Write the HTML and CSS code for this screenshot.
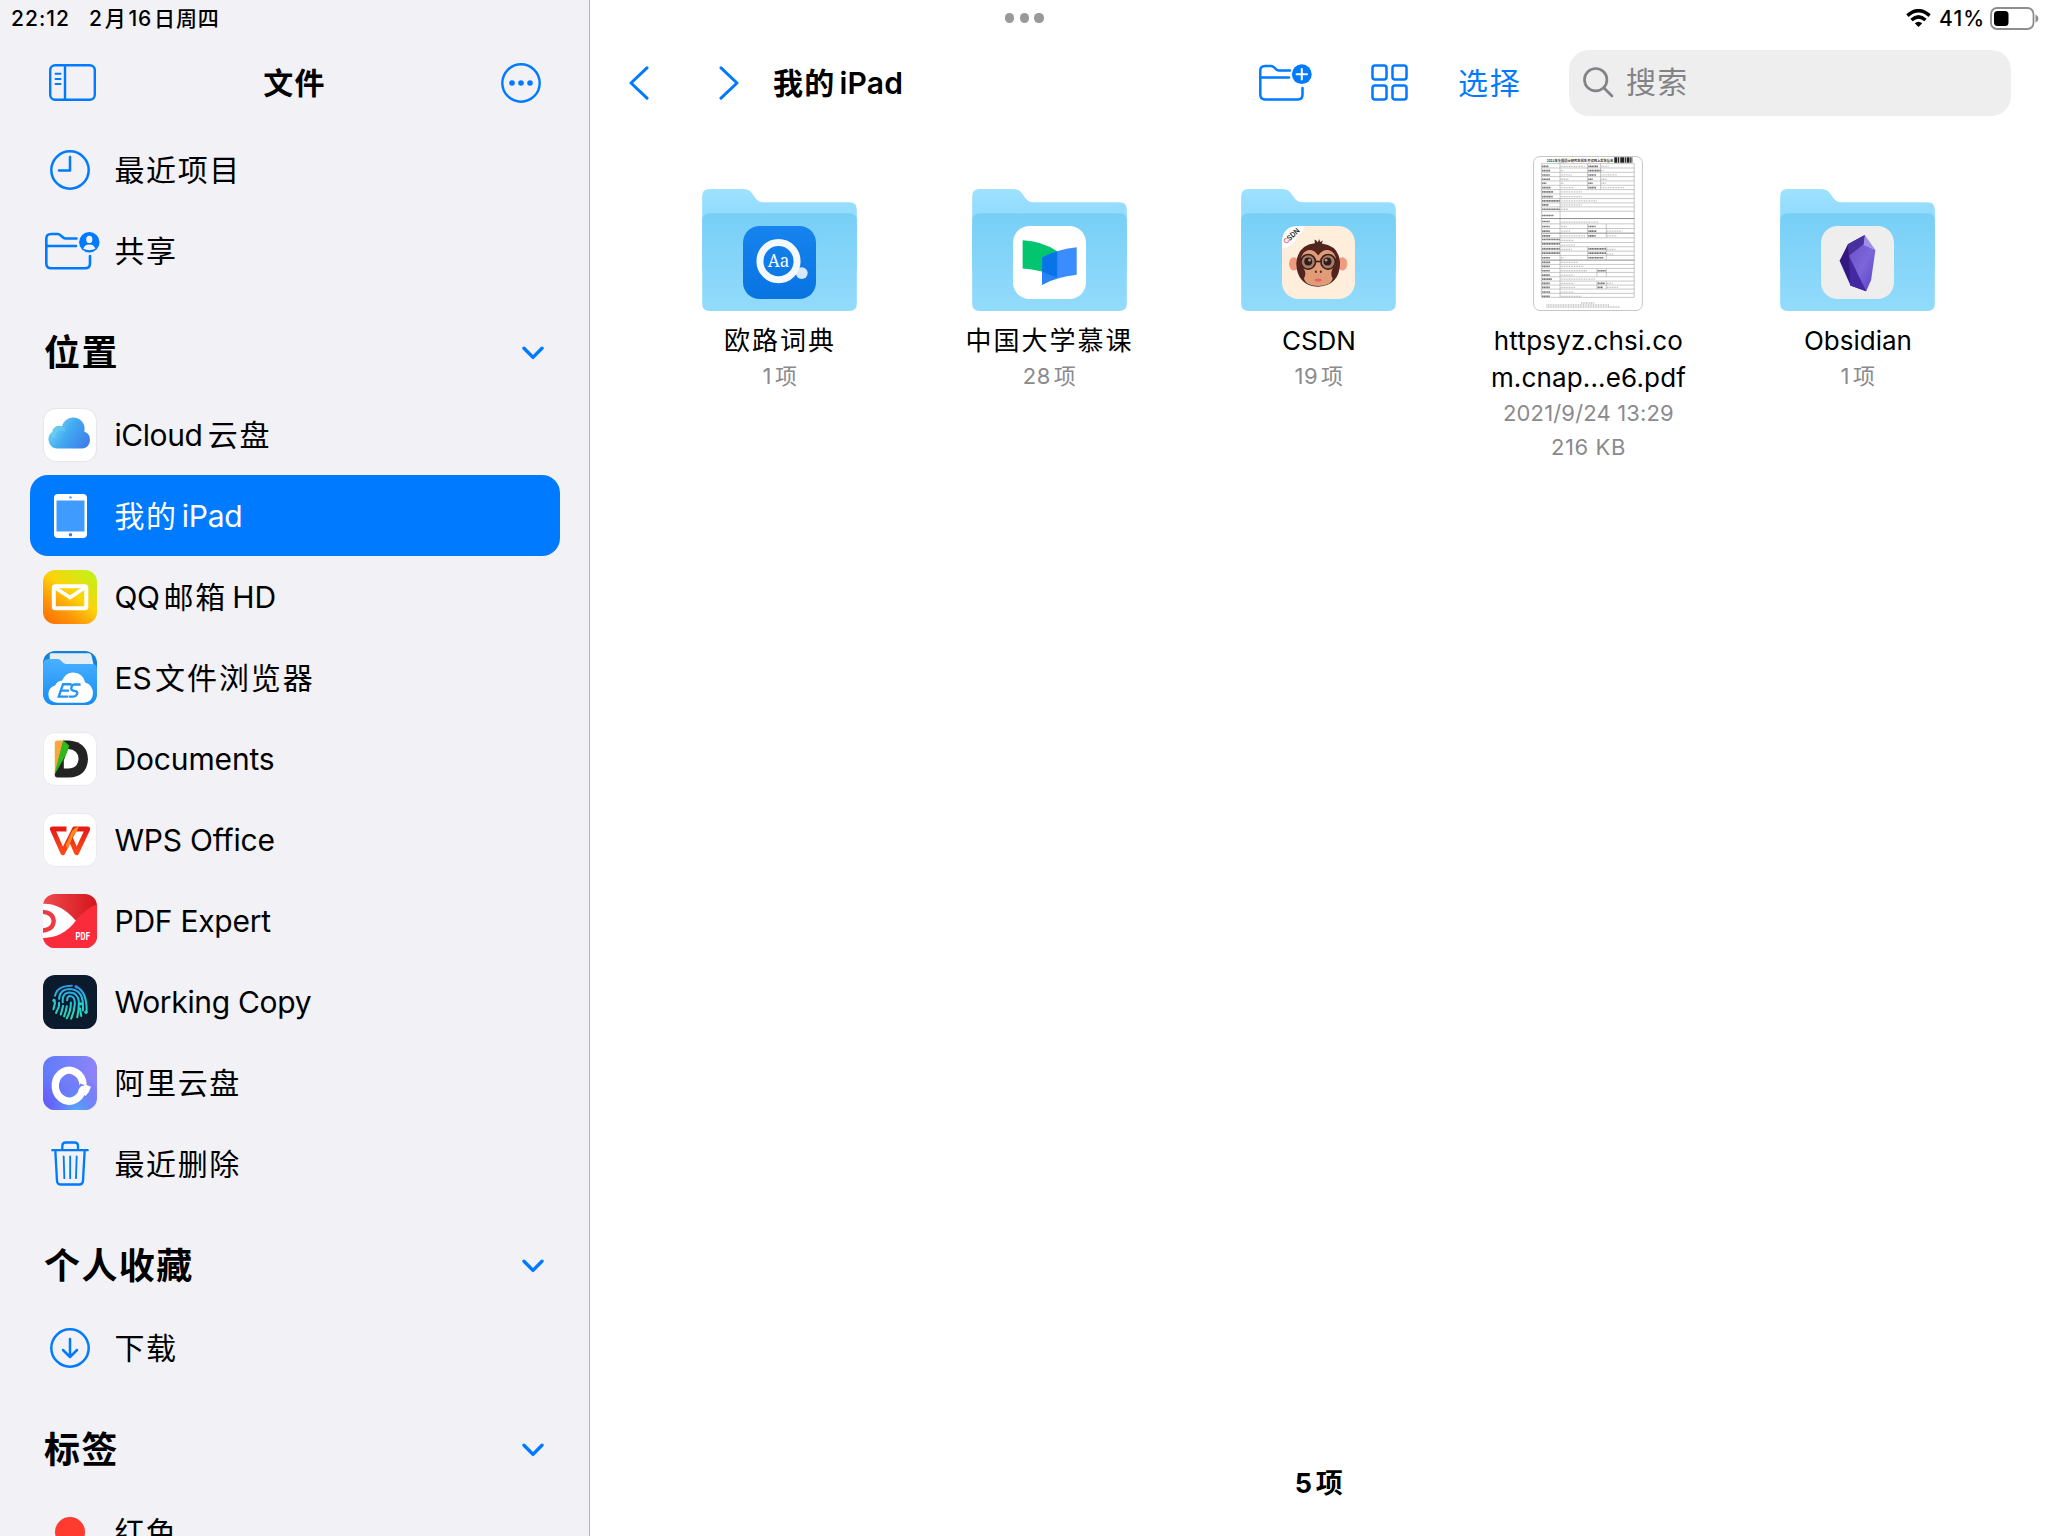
FILE: index.html
```html
<!DOCTYPE html>
<html lang="zh-CN">
<head>
<meta charset="utf-8">
<title>文件</title>
<link rel="stylesheet" href="styles.css">
</head>
<body>
<svg class="defs" width="0" height="0" aria-hidden="true">
  <defs>
    <linearGradient id="folderBack" x1="0" y1="0" x2="0" y2="1"><stop offset="0" stop-color="#9ee2ff"/><stop offset=".2" stop-color="#96ddfd"/><stop offset="1" stop-color="#8ad8fb"/></linearGradient>
    <linearGradient id="folderFront" x1="0" y1="0" x2="0" y2="1"><stop offset="0" stop-color="#77cff6"/><stop offset="1" stop-color="#93dbfc"/></linearGradient>
    <symbol id="folder" viewBox="68 58 464 366">
      <path fill="url(#folderBack)" d="M68 80Q68 58 90 58H190Q208 58 217 70L228 86Q237 98 252 98H510Q532 98 532 120V300H68Z"/>
      <path fill="url(#folderFront)" d="M68 154Q68 131 91 131H509Q532 131 532 154V402Q532 424 510 424H90Q68 424 68 402Z"/>
    </symbol>
    <symbol id="chevron" viewBox="0 0 22 14"><path d="M2 2.2 11 11.4 20 2.2" fill="none" stroke="#007aff" stroke-width="3.4" stroke-linecap="round" stroke-linejoin="round"/></symbol>
  </defs>
</svg>
<div class="screen">
  <aside class="sidebar">
    <div class="status status-left"><span class="time">22:12</span><span class="date">2<i class="thin"></i>月<i class="thin"></i>16<i class="thin"></i>日周四</span></div>
    <header class="side-head">
      <svg class="ic-panel" viewBox="0 0 47 37" fill="none" stroke="#007aff" stroke-width="2.4"><rect x="1.2" y="1.2" width="44.6" height="34.6" rx="5"/><path d="M16 1.2v34.6"/><path d="M6.5 9.8h5M6.5 14.9h5M6.5 20h5" stroke-width="2" stroke-linecap="round"/></svg>
      <h1>文件</h1>
      <svg class="ic-circle" viewBox="0 0 40 40"><circle cx="20" cy="20" r="18.7" fill="none" stroke="#007aff" stroke-width="2.4"/><g fill="#007aff"><circle cx="11" cy="20" r="2.8"/><circle cx="20" cy="20" r="2.8"/><circle cx="29" cy="20" r="2.8"/></g></svg>
    </header>
    <nav class="list">
      <div class="row"><span class="slot"><svg class="ic-circle" viewBox="0 0 40 40" fill="none" stroke="#007aff"><circle cx="20" cy="20" r="18.7" stroke-width="2.5"/><path d="M20 7v13.6H9" stroke-width="2.5" stroke-linecap="round" stroke-linejoin="round"/></svg></span><span class="label cjk">最近项目</span></div>
      <div class="row"><span class="slot"><svg class="ic-shared" viewBox="0 0 55 38"><g fill="none" stroke="#007aff" stroke-width="2.6" stroke-linecap="round" stroke-linejoin="round"><path d="M31.5 6.5H20.5C17 6.5 16.5 2 12.8 2H6Q1.3 2 1.3 6.7V31.5Q1.3 36.3 6.2 36.3H40.3Q45 36.3 45 31.5V24"/><path d="M1.3 14H31"/></g><circle cx="44.3" cy="10.3" r="10.2" fill="#007aff"/><ellipse cx="44.3" cy="7.4" rx="3.1" ry="3.7" fill="#f2f2f7"/><path d="M38.2 16.7Q39.5 12.4 44.3 12.4T50.4 16.7Q44.3 19.6 38.2 16.7Z" fill="#f2f2f7"/></svg></span><span class="label cjk">共享</span></div>
      <div class="section"><h2>位置</h2><svg class="ic-chev"><use href="#chevron"/></svg></div>
      <div class="row"><span class="slot"><span class="app white"><svg viewBox="0 0 52 52"><defs><linearGradient id="cl" x1="0" y1=".2" x2="1" y2=".7"><stop offset="0" stop-color="#7ed8f5"/><stop offset=".5" stop-color="#41a9f1"/><stop offset="1" stop-color="#3f7fe9"/></linearGradient></defs><path fill="url(#cl)" d="M13 39.500A9.300 9.300 0 0 1 8.300 22.700 7 7 0 0 1 18 17.300 11 11 0 0 1 40.300 22.500 8.900 8.900 0 0 1 39 39.500Z"/><path d="M9 22.700A7 7 0 0 1 19 18Q22 20 21 23 17 20.500 14 22.500 10.500 25 11 30 4 27 9 22.700Z" fill="#6fd3ee" opacity=".5"/></svg></span></span><span class="label"><span class="l-icloud">iCloud</span><i class="gap w"></i><span class="cjk">云盘</span></span></div>
      <div class="row selected"><span class="slot"><svg class="ic-ipad" viewBox="0 0 33 44"><rect width="33" height="44" rx="4" fill="#fff"/><rect x="2.500" y="6.500" width="28" height="31" fill="#409bff"/><circle cx="16.500" cy="3.400" r="1.200" fill="#409bff"/><circle cx="16.500" cy="40.700" r="1.700" fill="#2f7fe8"/></svg></span><span class="label"><span class="cjk">我的</span><i class="gap"></i><span class="l-ipad">iPad</span></span></div>
      <div class="row"><span class="slot"><svg class="app" viewBox="0 0 54 54"><defs><linearGradient id="qq" x1="0" y1="1" x2=".75" y2="0"><stop offset="0" stop-color="#ff6a00"/><stop offset=".3" stop-color="#fc9208"/><stop offset=".62" stop-color="#fbd30b"/><stop offset="1" stop-color="#c9ee17"/></linearGradient></defs><rect width="54" height="54" rx="12" fill="url(#qq)"/><rect x="10.800" y="16.300" width="32.500" height="22" rx="1.500" fill="none" stroke="#fff" stroke-width="4"/><path d="M12 17.500 27 27.500 42 17.500" fill="none" stroke="#fff" stroke-width="3.600"/></svg></span><span class="label"><span class="l-qq">QQ</span><i class="gap"></i><span class="cjk">邮箱</span><i class="gap w"></i><span class="l-hd">HD</span></span></div>
      <div class="row"><span class="slot"><svg class="app" viewBox="130 33 161 161"><defs><linearGradient id="es" x1="0" y1="0" x2="0" y2="1"><stop offset="0" stop-color="#48b0ff"/><stop offset="1" stop-color="#178cf5"/></linearGradient></defs><rect x="130" y="33" width="161" height="161" rx="36" fill="#1680d8"/><path d="M150 44Q150 40 155 40H267Q274 40 275 48L282 80H150Z" fill="#e6eef5"/><path d="M130 74Q130 57 148 57H172Q181 57 186 64T199 72H275Q291 72 291 88V158Q291 194 255 194H166Q130 194 130 158Z" fill="url(#es)"/><path d="M171 187Q146 185 146 162 146 142 166 136 172 122 187 121 197 97 220 97 249 98 256 127 279 134 279 160 278 185 253 187Z" fill="#fff"/><path d="M215 132H190L183 151H208M183 151 177 169H205M242 133H225Q217 133 215 140 212 149 220 151L229 153Q235 156 230 164 228 169 220 169H207" fill="none" stroke="#2494f5" stroke-width="7"/></svg></span><span class="label"><span class="l-es">ES</span><i class="gap s"></i><span class="cjk wide">文件浏览器</span></span></div>
      <div class="row"><span class="slot"><svg class="app" viewBox="130 275 161 161"><rect x="131.500" y="277" width="158" height="157" rx="34" fill="#fff" stroke="#e4e4e9" stroke-width="2"/><path d="M190 300H208Q263 305 264 356 262 408 208 411H173Q165 411 165 402Z" fill="#232323"/><path d="M204 326Q235 328 236 355 234 383 206 384H192V360Z" fill="#fff"/><path d="M165 308Q165 300 173 300H190L165 398Z" fill="#f9a63a"/><path d="M190 300Q198 305 208 316L202 336 165 402V396Z" fill="#2fb91e"/></svg></span><span class="label l-docs">Documents</span></div>
      <div class="row"><span class="slot"><svg class="app" viewBox="130 518 161 161"><defs><linearGradient id="wps" x1="0" y1="0" x2="0" y2="1"><stop offset="0" stop-color="#e51c17"/><stop offset="1" stop-color="#ff4a17"/></linearGradient></defs><rect x="131.500" y="520" width="158" height="157" rx="34" fill="#fff" stroke="#e4e4e9" stroke-width="2"/><path d="M200 566H158L189 636 224 566H263L230 636 212 594" fill="none" stroke="url(#wps)" stroke-width="15" stroke-linejoin="round"/><path d="M198 614 212 581Q219 561 237 559L230 575Q224 578 218 591L204 625Z" fill="#fb8a20"/></svg></span><span class="label l-wps">WPS Office</span></div>
      <div class="row"><span class="slot"><svg class="app" viewBox="130 762 161 161"><defs><linearGradient id="pe" x1="0" y1="0" x2="1" y2="0"><stop offset="0" stop-color="#ef4a4c"/><stop offset="1" stop-color="#d3151d"/></linearGradient><clipPath id="pc"><rect x="130" y="762" width="161" height="161" rx="36"/></clipPath></defs><g clip-path="url(#pc)"><path fill="url(#pe)" d="M130 762H291V923H130Z"/><path d="M291 792Q250 810 228 842 205 870 168 888L130 893V923H291Z" fill="#fa2b3a"/><path d="M130 791Q184 789 228 842 188 894 130 893Z" fill="#fff"/><path d="M128 815Q160 817 162 842 160 869 128 871" fill="none" stroke="#ee3a45" stroke-width="13"/></g><text x="227" y="899" font-family="Roboto, sans-serif" font-weight="700" font-size="33" textLength="43" lengthAdjust="spacingAndGlyphs" fill="#fff">PDF</text></svg></span><span class="label l-pdf">PDF Expert</span></div>
      <div class="row"><span class="slot"><svg class="app" viewBox="130 45 161 161"><defs><linearGradient id="wc" gradientUnits="userSpaceOnUse" x1="210" y1="70" x2="210" y2="178"><stop offset="0" stop-color="#2d8fe0"/><stop offset=".45" stop-color="#25c3e0"/><stop offset="1" stop-color="#27e0b0"/></linearGradient></defs><rect x="130" y="45" width="161" height="161" rx="36" fill="#0c1a2d"/><g fill="none" stroke="url(#wc)" stroke-width="6" stroke-linecap="round"><path d="M166 107Q172 77 216 77M229 80Q262 94 260 155"/><path d="M162 121 166 128 161 147M178 116Q180 87 211 87 248 90 249 132V151"/><path d="M178 128 177 140 169 158M189 126Q186 98 210 97 236 98 237 127 237 150 232 171"/><path d="M190 137 183 163M202 120Q203 107 212 108 225 110 225 130 223 155 214 175"/><path d="M201 138Q198 157 193 168M213 127Q214 150 201 174M240 144 244 167"/></g><g fill="#28d3c8"><circle cx="163" cy="121" r="5"/><circle cx="242" cy="131" r="5"/><circle cx="258" cy="156" r="5"/><circle cx="229" cy="80" r="5" fill="#2d8fe0"/></g></svg></span><span class="label l-wc">Working Copy</span></div>
      <div class="row"><span class="slot"><svg class="app" viewBox="130 288 161 161"><defs><linearGradient id="al" x1="0" y1="0" x2="1" y2="0"><stop offset="0" stop-color="#5f7cfb"/><stop offset="1" stop-color="#8f83f8"/></linearGradient><radialGradient id="al2" cx=".62" cy="1" r=".65"><stop offset="0" stop-color="#55aafd"/><stop offset="1" stop-color="#5b63f5" stop-opacity="0"/></radialGradient><radialGradient id="al3" cx="0" cy=".95" r=".6"><stop offset="0" stop-color="#6a55f8"/><stop offset="1" stop-color="#6a55f8" stop-opacity="0"/></radialGradient></defs><rect x="130" y="288" width="161" height="161" rx="36" fill="url(#al)"/><rect x="130" y="288" width="161" height="161" rx="36" fill="url(#al3)"/><rect x="130" y="288" width="161" height="161" rx="36" fill="url(#al2)"/><path d="M249.500 374A41.500 46 0 1 0 248 389" fill="none" stroke="#fff" stroke-width="22"/><path d="M258 374 273 380Q269 396 257 407L236 388 243 378Z" fill="#fff"/><path d="M239.500 370 253 374.500 242 378.500Z" fill="#6b83f9"/></svg></span><span class="label cjk">阿里云盘</span></div>
      <div class="row"><span class="slot"><svg class="ic-trash" viewBox="152 546 114 134" fill="none" stroke="#007aff" stroke-width="7" stroke-linecap="round" stroke-linejoin="round"><path d="M156 573H262M186 572V560Q186 550 196 550H223Q233 550 233 560V572M165 574 170 665Q171 676 182 676H237Q247 676 248 665L253 574"/><path d="M190 592 192 657M209.500 592V657M229 592 227 657" stroke-width="5.500"/></svg></span><span class="label cjk">最近删除</span></div>
      <div class="section"><h2>个人收藏</h2><svg class="ic-chev"><use href="#chevron"/></svg></div>
      <div class="row"><span class="slot"><svg class="ic-circle" viewBox="0 0 40 40" fill="none" stroke="#007aff" stroke-width="2.500" stroke-linecap="round" stroke-linejoin="round"><circle cx="20" cy="20" r="18.700"/><path d="M20 11v17.500M13 22l7 7 7-7"/></svg></span><span class="label cjk">下载</span></div>
      <div class="section"><h2>标签</h2><svg class="ic-chev"><use href="#chevron"/></svg></div>
      <div class="row"><span class="slot"><span class="tag-red"></span></span><span class="label cjk">红色</span></div>
    </nav>
  </aside>

  <main class="main">
    <div class="status status-right">
      <span class="multitask"><i></i><i></i><i></i></span>
      <span class="indicators">
        <svg class="ic-wifi" viewBox="0 0 25 18" fill="none" stroke="#000" stroke-width="3.500"><path d="M1.400 6.600Q12.500-3.200 23.600 6.600"/><path d="M5.500 11Q12.500 4.800 19.500 11"/><path d="M8.800 14.300Q12.500 11.200 16.200 14.300L12.500 18Z" fill="#000" stroke="none"/></svg>
        <span class="pct">41%</span>
        <svg class="ic-batt" viewBox="0 0 49 23"><rect x="1" y="1" width="42.500" height="21" rx="6" fill="none" stroke="#8e8e8e" stroke-width="1.800"/><rect x="4" y="4" width="14.500" height="15" rx="3.500"/><path d="M45.500 7.500Q48.500 9 48.500 11.500T45.500 15.500Z" fill="#8e8e8e"/></svg>
      </span>
    </div>
    <header class="toolbar">
      <svg class="ic-nav" viewBox="0 0 20 34"><path d="M18 1.800 2 17 18 32.200" fill="none" stroke="#007aff" stroke-width="3" stroke-linecap="round" stroke-linejoin="round"/></svg>
      <svg class="ic-nav fwd" viewBox="0 0 20 34"><path d="M2 1.800 18 17 2 32.200" fill="none" stroke="#007aff" stroke-width="3" stroke-linecap="round" stroke-linejoin="round"/></svg>
      <h2 class="title"><span class="title-cjk">我的</span><i class="gap"></i><span class="title-lat">iPad</span></h2>
      <svg class="ic-newfolder" viewBox="0 0 53 37"><g fill="none" stroke="#007aff" stroke-width="2.500" stroke-linecap="round" stroke-linejoin="round"><path d="M31 6.500H19.500C16 6.500 16 2 12.200 2H6Q1.300 2 1.300 6.700V30.500Q1.300 35.500 6.200 35.500H39Q43.500 35.500 43.500 30.500V24"/><path d="M1.300 13.500H30"/></g><circle cx="42.800" cy="10.200" r="9.900" fill="#007aff"/><path d="M42.800 5v10.400M37.600 10.200H48" stroke="#fff" stroke-width="2" stroke-linecap="round"/></svg>
      <svg class="ic-grid" viewBox="0 0 37 37" fill="none" stroke="#007aff" stroke-width="2.500"><rect x="1.500" y="1.500" width="14" height="14" rx="2.500"/><rect x="21.500" y="1.500" width="14" height="14" rx="2.500"/><rect x="1.500" y="21.500" width="14" height="14" rx="2.500"/><rect x="21.500" y="21.500" width="14" height="14" rx="2.500"/></svg>
      <span class="select">选择</span>
      <div class="search"><svg viewBox="0 0 31 31" fill="none" stroke="#838387" stroke-width="2.700" stroke-linecap="round"><circle cx="12.700" cy="12.700" r="11.200"/><path d="M21 21 29 29"/></svg><span>搜索</span></div>
    </header>

    <section class="files">
      <div class="file">
        <div class="thumb"><svg class="folder"><use href="#folder"/></svg>
          <svg class="badge" viewBox="190 167 220 220"><defs><linearGradient id="eu" x1="0" y1="0" x2="0" y2="1"><stop offset="0" stop-color="#1683ee"/><stop offset="1" stop-color="#0774e2"/></linearGradient></defs><rect x="190" y="167" width="220" height="220" rx="50" fill="url(#eu)"/><circle cx="367" cy="309" r="18" fill="#d7e8fc"/><circle cx="297" cy="273" r="56" fill="none" stroke="#f4f9ff" stroke-width="21"/><text x="297" y="291" text-anchor="middle" font-family="'Noto Serif', 'DejaVu Serif', serif" font-size="54" textLength="65" lengthAdjust="spacingAndGlyphs" fill="#fff">Aa</text></svg></div>
        <div class="name n-cjk">欧路词典</div>
        <div class="meta">1<i class="mg"></i>项</div>
      </div>
      <div class="file">
        <div class="thumb"><svg class="folder"><use href="#folder"/></svg>
          <svg class="badge" viewBox="999 167 220 220"><rect x="999" y="167" width="220" height="220" rx="50" fill="#fff"/><path d="M1028 210Q1088 213 1132 243V321Q1085 299 1028 295Z" fill="#04c56f"/><path d="M1087 262Q1130 238 1191 231V314Q1130 321 1087 344Z" fill="#3b8cff"/><path d="M1087 262Q1108 250 1132 243V321Q1110 330 1087 344Z" fill="#0874e8"/><path d="M1087 305 1132 322Q1110 330 1087 344Z" fill="#2a83f5"/></svg></div>
        <div class="name n-cjk">中国大学慕课</div>
        <div class="meta">28<i class="mg"></i>项</div>
      </div>
      <div class="file">
        <div class="thumb"><svg class="folder"><use href="#folder"/></svg>
          <svg class="badge" viewBox="189 167 220 220"><rect x="189" y="167" width="220" height="220" rx="50" fill="#feeedb"/><path d="M239 167H256Q253 190 236 195 228 228 189 235V217Q189 167 239 167Z" fill="#fff"/><text transform="translate(202 223) rotate(-44)" font-family="Inter, sans-serif" font-size="22" font-weight="600" textLength="58" lengthAdjust="spacingAndGlyphs" fill="#222"><tspan fill="#f0524a">C</tspan>SDN</text>
          <g fill="#f09a80"><ellipse cx="225" cy="281" rx="15" ry="20"/><ellipse cx="371" cy="281" rx="15" ry="20"/></g><path d="M288 219 287 208Q294 211 297 217L301 206 304 215 312 211 309 220Q361 227 364 278 363 346 298 350 234 347 232 279 237 224 288 219Z" fill="#53231f"/><path d="M298 256Q316 232 338 243 356 254 350 285 330 304 342 326 335 348 298 348 262 348 255 326 267 304 246 285 242 254 260 243 281 232 298 256Z" fill="#df9c77"/><g stroke="#3e211c" stroke-width="5" fill="#a87c69"><circle cx="268" cy="275" r="22"/><circle cx="328" cy="275" r="22"/><path d="M289 274H307"/></g><g fill="#2d1d1d"><circle cx="268" cy="274" r="12"/><circle cx="326" cy="274" r="12"/></g><g fill="#b98f85"><circle cx="272" cy="270" r="4"/><circle cx="322" cy="270" r="4"/></g><g fill="#5b251e"><ellipse cx="291" cy="305" rx="3" ry="4"/><ellipse cx="306" cy="305" rx="3" ry="4"/></g><ellipse cx="298" cy="330" rx="11" ry="5" fill="#e8626a"/></svg></div>
        <div class="name n-csdn">CSDN</div>
        <div class="meta">19<i class="mg"></i>项</div>
      </div>
      <div class="file">
        <div class="thumb"><svg class="doc" viewBox="192 48 330 466"><rect x="193.500" y="49.500" width="327" height="463" rx="19" fill="#fff" stroke="#c6c6c6" stroke-width="3"/><text x="233" y="67" font-family="'Noto Sans CJK SC', sans-serif" font-weight="700" font-size="11" textLength="200" lengthAdjust="spacingAndGlyphs" fill="#444">2021年全国硕士研究生招生考试网上报名信息</text><path d="M436 60H492" stroke="#222" stroke-width="16" stroke-dasharray="9 2 4 3 12 2 3 2"/>
          <path d="M217 71H496V473H217ZM273 71V473M217 84H496M217 97H496M217 110H496M217 123H496M217 136H496M217 149H496M217 162H496M217 176H496M217 189H496M217 201H496M217 214H496M217 252H496M217 266H496M217 294H496M217 308H496M217 321H496M217 334H496M217 347H496M217 374H496M217 386H496M217 398H496M217 411H496M217 424H496M217 436H496M217 448H496M217 461H496M356 71V149M395 71V149M356 252V294M412 252V294M356 321V360M412 321V360M384 386V411M412 386V411M384 424V448M412 424V448" fill="none" stroke="#8f8f8f" stroke-width="1.500"/><path d="M217 236H496M217 280H496M217 361H496" stroke="#555" stroke-width="2"/>
          <g fill="none" stroke="#777" stroke-width="5" stroke-dasharray="4 1"><path d="M219 79H238M219 92H243M219 105H242M219 118H243M219 130H232M219 143H245M219 156H252M219 170H251M219 183H272M219 195H238M219 208H272M219 227H253M219 245H242M219 260H242M219 274H242M219 288H243M219 299H272M219 312H272M219 327H272M219 340H272M219 354H242M219 368H243M219 380H242M219 393H242M219 406H242M219 418H249M219 431H242M219 443H242M219 457H244M219 470H242"/><path d="M358 79H387M358 92H395M358 105H381M358 118H371M358 130H371M358 143H381M358 260H380M358 274H382M358 288H380M358 327H411M358 340H411M358 354H404M386 393H411M386 431H408M386 443H402"/></g>
          <g fill="none" stroke="#bdbdbd" stroke-width="4" stroke-dasharray="3 2"><path d="M275 79H347M275 92H285M275 105H309M275 118H299M275 130H284M275 143H313M275 156H339M275 170H339M275 183H384M275 195H340M275 208H297M275 247H388M275 260H293M275 274H304M275 288H350M275 302H313M275 316H318M275 329H310M275 354H285M275 368H327M275 380H343M275 393H354M275 406H314M275 418H378M275 431H313M275 443H320M275 457H313M275 470H337M397 79H419M397 92H404M397 105H444M397 118H414M397 130H411M397 143H467M414 274H460M414 288H444M414 329H440M414 343H435M414 431H431M414 443H447M336 490H377M232 496H422M232 502H453"/></g></svg></div>
        <div class="name n-pdf1">httpsyz.chsi.co</div>
        <div class="name n-pdf2">m.cnap...e6.pdf</div>
        <div class="meta m-date">2021/9/24 13:29</div>
        <div class="meta m-size">216 KB</div>
      </div>
      <div class="file">
        <div class="thumb"><svg class="folder"><use href="#folder"/></svg>
          <svg class="badge" viewBox="184 167 220 220"><defs><linearGradient id="ob" x1="0" y1="0" x2="1" y2="1"><stop offset="0" stop-color="#6a50c9"/><stop offset=".5" stop-color="#7c66d9"/><stop offset="1" stop-color="#5a3fc4"/></linearGradient></defs><rect x="184" y="167" width="220" height="220" rx="50" fill="#eeeeef"/><path d="M316 194 265 222 240 272 273 346 320 364Z" fill="#33197f"/><path d="M316 194 265 222 268 257 312 224Z" fill="#48309f"/><path d="M268 257 272 346 320 364Z" fill="#4428a3"/><path d="M268 257 312 222 348 239 335 330 320 364Z" fill="url(#ob)"/><path d="M316 194 348 239 312 224Z" fill="#a08fe6"/></svg></div>
        <div class="name n-obs">Obsidian</div>
        <div class="meta">1<i class="mg"></i>项</div>
      </div>
    </section>
    <footer class="count">5<i class="mg"></i>项</footer>
  </main>
</div>
</body>
</html>
```
FILE: styles.css
```css
* { box-sizing: border-box; margin: 0; padding: 0; }
body { width: 2048px; height: 1536px; overflow: hidden; background: #fff; color: #000; font-family: Inter, "Noto Sans CJK SC", sans-serif; }
i { font-style: normal; display: inline-block; }
svg { display: block; flex: none; }
.defs { position: absolute; }
.screen { display: flex; width: 2048px; height: 1536px; overflow: hidden; }

/* Sidebar */
.sidebar { width: 590px; flex: none; height: 1536px; overflow: hidden; background: #f1f1f6; border-right: 1px solid #b4b4b8; }
.status { display: flex; height: 36px; font-size: 21px; font-weight: 500; line-height: 37px; white-space: nowrap; }
.status-left { padding-left: 11px; gap: 20px; }
.time { width: 58px; letter-spacing: 1px; }
.date { letter-spacing: .8px; }
.thin { width: 2px; }
.side-head { height: 93px; padding: 0 48px 0 49px; display: flex; align-items: center; justify-content: space-between; }
.side-head h1 { font-size: 30px; font-weight: 600; letter-spacing: 1.2px; line-height: 40px; margin-right: 8px; }
.ic-panel { width: 47px; height: 37px; }
.ic-circle { width: 40px; height: 40px; }
.row { display: flex; align-items: center; height: 81px; margin: 0 29px 0 30px; padding-left: 13px; border-radius: 18px; }
.slot { width: 54px; height: 54px; flex: none; display: flex; align-items: center; justify-content: center; margin-right: 17.500px; }
.label { font-size: 30px; line-height: 40px; white-space: nowrap; }
.cjk { letter-spacing: 1.600px; }
.cjk.wide { letter-spacing: 1.900px; }
.gap { width: 4px; }
.gap.s { width: 3.500px; }
.gap.w { width: 5.500px; }
.l-icloud { letter-spacing: -.45px; }
.l-ipad { letter-spacing: -.2px; }
.l-qq { letter-spacing: -.4px; }
.l-es { letter-spacing: -.1px; }
.l-docs { letter-spacing: -.15px; }
.l-wps { letter-spacing: -.2px; }
.l-pdf { letter-spacing: -.25px; }
.l-wc { letter-spacing: -.33px; }
.selected { background: #007aff; color: #fff; }
.section { height: 103px; display: flex; align-items: center; justify-content: space-between; padding: 20px 45px 0 44px; }
.section h2 { font-size: 36px; font-weight: 600; line-height: 48px; letter-spacing: 1.400px; }
.ic-chev { width: 22px; height: 14px; }
.app { width: 54px; height: 54px; }
.app.white { width: 52px; height: 52px; background: #fff; border-radius: 12px; box-shadow: 0 0 0 1px #e6e6eb; }
.ic-shared { width: 55px; height: 38px; margin-left: 4px; }
.ic-ipad { width: 33px; height: 44px; }
.ic-trash { width: 38px; height: 45px; }
.tag-red { width: 30px; height: 30px; border-radius: 50%; background: #ff3b30; }

/* Content */
.main { flex: 1; height: 1536px; display: flex; flex-direction: column; }
.status-right { padding: 0 9px 0 415px; justify-content: space-between; align-items: center; }
.multitask { display: flex; gap: 5.400px; }
.multitask i { width: 9.300px; height: 9.300px; border-radius: 50%; background: #999; }
.indicators { display: flex; align-items: center; }
.ic-wifi { width: 25px; height: 18px; }
.pct { width: 46px; margin: 0 5px 0 8px; letter-spacing: 1.200px; }
.ic-batt { width: 49px; height: 23px; }
.toolbar { height: 93px; display: flex; align-items: center; padding-left: 39px; }
.ic-nav { width: 20px; height: 34px; }
.fwd { margin-left: 70px; }
.title { width: 485px; margin-left: 34px; font-size: 30px; line-height: 40px; font-weight: 600; white-space: nowrap; }
.title-cjk { letter-spacing: 1.200px; }
.title-lat { letter-spacing: .2px; }
.ic-newfolder { width: 53px; height: 37px; margin-left: 1px; }
.ic-grid { width: 37px; height: 37px; margin-left: 59px; }
.select { width: 62px; margin-left: 50px; font-size: 30px; line-height: 40px; letter-spacing: 1.800px; color: #007aff; white-space: nowrap; }
.search { width: 442px; height: 66px; margin-left: 49px; padding-left: 14px; display: flex; align-items: center; gap: 12px; border-radius: 20px; background: #eeeeef; color: #838387; font-size: 30px; line-height: 40px; letter-spacing: 1.200px; }
.search svg { width: 31px; height: 31px; }
.search span { padding-bottom: 1px; }
.files { display: grid; grid-template-columns: repeat(5, 269.500px); padding: 27px 0 0 55.200px; }
.file { display: flex; flex-direction: column; align-items: center; }
.thumb { position: relative; width: 155px; height: 155px; margin-bottom: 11px; display: flex; align-items: flex-end; justify-content: center; }
.folder { width: 155px; height: 122px; }
.badge { position: absolute; left: 41px; top: 70px; width: 73px; height: 73px; }
.doc { width: 110px; height: 155px; }
.name { height: 37px; font-size: 26px; line-height: 37px; white-space: nowrap; }
.n-cjk { letter-spacing: 2px; }
.n-pdf1 { letter-spacing: .22px; }
.n-pdf2 { letter-spacing: .15px; }
.meta { height: 34px; font-size: 22px; line-height: 34px; letter-spacing: .4px; color: #8a8a8e; white-space: nowrap; }
.m-date { letter-spacing: .15px; }
.m-size { letter-spacing: .6px; }
.mg { width: 3px; }
.count { margin-top: auto; height: 102px; text-align: center; font-size: 27px; font-weight: 700; line-height: 100px; letter-spacing: .6px; }
```
